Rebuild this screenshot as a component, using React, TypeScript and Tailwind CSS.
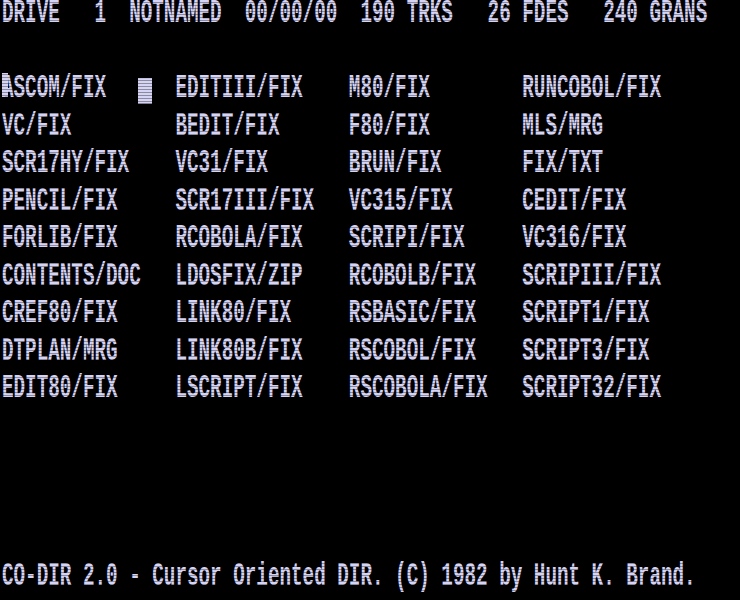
import React from 'react';

const header = 'DRIVE   1  NOTNAMED  00/00/00  190 TRKS   26 FDES   240 GRANS';

const files: string[][] = [
  ['ASCOM/FIX', 'EDITIII/FIX', 'M80/FIX', 'RUNCOBOL/FIX'],
  ['VC/FIX', 'BEDIT/FIX', 'F80/FIX', 'MLS/MRG'],
  ['SCR17HY/FIX', 'VC31/FIX', 'BRUN/FIX', 'FIX/TXT'],
  ['PENCIL/FIX', 'SCR17III/FIX', 'VC315/FIX', 'CEDIT/FIX'],
  ['FORLIB/FIX', 'RCOBOLA/FIX', 'SCRIPI/FIX', 'VC316/FIX'],
  ['CONTENTS/DOC', 'LDOSFIX/ZIP', 'RCOBOLB/FIX', 'SCRIPIII/FIX'],
  ['CREF80/FIX', 'LINK80/FIX', 'RSBASIC/FIX', 'SCRIPT1/FIX'],
  ['DTPLAN/MRG', 'LINK80B/FIX', 'RSCOBOL/FIX', 'SCRIPT3/FIX'],
  ['EDIT80/FIX', 'LSCRIPT/FIX', 'RSCOBOLA/FIX', 'SCRIPT32/FIX'],
];

const footer = 'CO-DIR 2.0 - Cursor Oriented DIR. (C) 1982 by Hunt K. Brand.';

// one 64-column text row of the TRS-80 screen
const Row: React.FC<{ children?: React.ReactNode }> = ({ children }) => (
  <div className="h-[37.5px]">
    <div className="relative -top-[2px] whitespace-pre origin-top scale-y-[1.7] font-['Liberation_Mono',monospace] font-bold text-[19.27px] leading-[19.27px] text-[#d6d4f4]">
      {children}
    </div>
  </div>
);

const App: React.FC = () => {
  const line = (cols: string[]) => cols.map((c, i) => (i < 3 ? c.padEnd(15) : c)).join('');

  return (
    <div className="relative w-[740px] h-[600px] overflow-hidden bg-black pl-[2px]">
      <Row>{header}</Row>
      <Row />
      {files.map((cols, i) =>
        i === 0 ? (
          <Row key={i}>
            <span className="relative">
              <span className="absolute left-[0px] top-[2px] h-[14px] w-[6px] bg-[#d6d4f4]"></span>
              {cols[0].padEnd(12)}
            </span>
            <span className="inline-block h-[15px] w-[14px] -ml-[3px] mr-[0.56px] align-[-4px] bg-[#d6d4f4]"></span>
            {'  '}
            {line(cols.slice(1))}
          </Row>
        ) : (
          <Row key={i}>{line(cols)}</Row>
        )
      )}
      <Row />
      <Row />
      <Row />
      <Row />
      <Row>{footer}</Row>
      <div className="pointer-events-none absolute inset-0 bg-[repeating-linear-gradient(to_bottom,transparent_0px,transparent_2px,rgba(0,0,0,0.35)_2px,rgba(0,0,0,0.35)_3px)]"></div>
    </div>
  );
};

export default App;
